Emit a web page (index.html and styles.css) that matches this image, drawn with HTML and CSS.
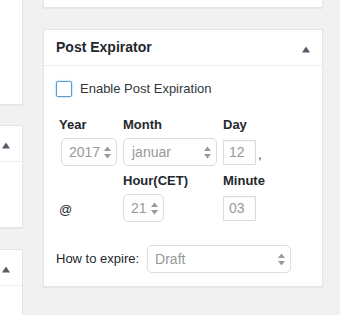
FILE: index.html
```html
<!DOCTYPE html>
<html>
<head>
<meta charset="utf-8">
<link rel="stylesheet" href="styles.css">
</head>
<body>
<div class="page">
  <div class="col-left">
    <div class="box box-a"></div>
    <div class="box box-b">
      <div class="hdr"><svg class="arrow" width="8" height="7" viewBox="0 0 8 7"><polygon points="0,6.5 4,0.5 8,6.5"/></svg></div>
    </div>
    <div class="box box-c">
      <div class="hdr"><svg class="arrow" width="8" height="7" viewBox="0 0 8 7"><polygon points="0,6.5 4,0.5 8,6.5"/></svg></div>
    </div>
  </div>
  <div class="col-right">
    <div class="box box-top"></div>
    <div class="box pe">
      <div class="hdr">
        <h2 class="title">Post Expirator</h2>
        <svg class="arrow" width="8" height="7" viewBox="0 0 8 7"><polygon points="0,6.5 4,0.5 8,6.5"/></svg>
      </div>
      <div class="inside">
        <label class="enable"><span class="cb"></span>Enable Post Expiration</label>
        <div class="dt">
          <div class="lbl">Year</div>
          <div class="lbl">Month</div>
          <div class="lbl">Day</div>

          <div class="sel w-year"><span class="val">2017</span><svg class="spin" width="7" height="13" viewBox="0 0 7 13"><polygon points="0,5 3.5,0.5 7,5"/><polygon points="0,8 3.5,12.5 7,8"/></svg></div>
          <div class="sel w-month"><span class="val">januar</span><svg class="spin" width="7" height="13" viewBox="0 0 7 13"><polygon points="0,5 3.5,0.5 7,5"/><polygon points="0,8 3.5,12.5 7,8"/></svg></div>
          <div class="cell"><div class="inp">12</div><span class="comma">,</span></div>

          <div></div>
          <div class="lbl lbl-low">Hour(CET)</div>
          <div class="lbl lbl-low">Minute</div>

          <div class="cell at">@</div>
          <div class="sel w-hour"><span class="val">21</span><svg class="spin" width="7" height="13" viewBox="0 0 7 13"><polygon points="0,5 3.5,0.5 7,5"/><polygon points="0,8 3.5,12.5 7,8"/></svg></div>
          <div class="cell"><div class="inp">03</div></div>
        </div>
        <div class="how">
          <span class="how-lbl">How to expire:</span>
          <div class="sel w-how"><span class="val">Draft</span><svg class="spin" width="7" height="13" viewBox="0 0 7 13"><polygon points="0,5 3.5,0.5 7,5"/><polygon points="0,8 3.5,12.5 7,8"/></svg></div>
        </div>
      </div>
    </div>
  </div>
</div>
</body>
</html>
```
FILE: styles.css
```css
html, body {
  margin: 0;
  padding: 0;
}
body {
  width: 340px;
  height: 315px;
  overflow: hidden;
  background: #f1f1f1;
  font-family: "Liberation Sans", Arial, sans-serif;
  font-size: 13px;
  color: #32373c;
}
.page {
  display: flex;
  gap: 20px;
  height: 315px;
  overflow: hidden;
}
.col-left {
  width: 23px;
  flex: none;
  display: flex;
  flex-direction: column;
}
.col-right {
  width: 280px;
  flex: none;
  display: flex;
  flex-direction: column;
}
.box {
  box-sizing: border-box;
  background: #fff;
  border: 1px solid #e5e5e5;
  box-shadow: 0 1px 1px rgba(0, 0, 0, 0.04);
}
.col-left .box {
  border-left: 0;
}
.box-a {
  margin-top: -20px;
  height: 125px;
}
.box-b {
  margin-top: 20px;
  height: 103px;
}
.box-c {
  margin-top: 21px;
  height: 66px;
  border-bottom: 0;
  box-shadow: none;
}
.box-top {
  margin-top: -20px;
  height: 28px;
}
.pe {
  margin-top: 21px;
}
.hdr {
  height: 35px;
  box-sizing: content-box;
  border-bottom: 1px solid #eee;
  display: flex;
  align-items: center;
  padding: 0 12px;
}
.col-left .hdr {
  justify-content: flex-end;
  padding-left: 0;
}
.title {
  margin: 0;
  font-size: 14px;
  line-height: 19.6px;
  font-weight: bold;
  color: #23282d;
}
.arrow {
  display: block;
  margin-left: auto;
  margin-top: 3px;
  fill: #555d66;
}
.inside {
  padding: 15px 12px 13px 12px;
}
.enable {
  display: flex;
  align-items: center;
  gap: 8px;
  height: 16px;
  line-height: 16px;
}
.cb {
  box-sizing: border-box;
  width: 16px;
  height: 16px;
  border: 1px solid #5b9dd9;
  border-radius: 2px;
  box-shadow: 0 0 2px rgba(30, 140, 190, 0.6);
  background: #fff;
}
.dt {
  margin-top: 19px;
  margin-left: 3px;
  display: grid;
  grid-template-columns: 64px 100px auto;
  grid-template-rows: 17px 28px 18px 28px;
  row-gap: 5px;
}
.lbl {
  font-weight: bold;
  line-height: 17px;
  color: #23282d;
}
.lbl-low {
  align-self: end;
}
.sel {
  box-sizing: border-box;
  height: 28px;
  display: flex;
  align-items: center;
  border: 1px solid #ddd;
  border-radius: 5px;
  background: #fff;
  padding: 0 5px 0 7px;
  font-size: 14px;
  line-height: 18px;
  color: #999;
}
.spin {
  display: block;
  margin-left: auto;
  fill: #999;
}
.w-year {
  width: 56px;
  margin-left: 2px;
}
.w-month {
  width: 94px;
  padding-left: 8px;
}
.w-hour {
  width: 41px;
}
.w-how {
  width: 144px;
}
.cell {
  display: flex;
  align-items: center;
}
.inp {
  box-sizing: border-box;
  width: 33px;
  height: 25px;
  border: 1px solid #ddd;
  box-shadow: inset 0 1px 2px rgba(0, 0, 0, 0.04);
  padding-left: 5px;
  font-size: 14px;
  line-height: 23px;
  color: #999;
}
.comma {
  margin-left: 2px;
  margin-top: 4px;
  color: #32373c;
}
.at {
  line-height: 17px;
  padding-top: 3px;
  color: #23282d;
}
.how {
  margin-top: 23px;
  display: flex;
  align-items: center;
  gap: 8px;
}
.how-lbl {
  line-height: 17px;
  padding-bottom: 2px;
  color: #23282d;
}
```
